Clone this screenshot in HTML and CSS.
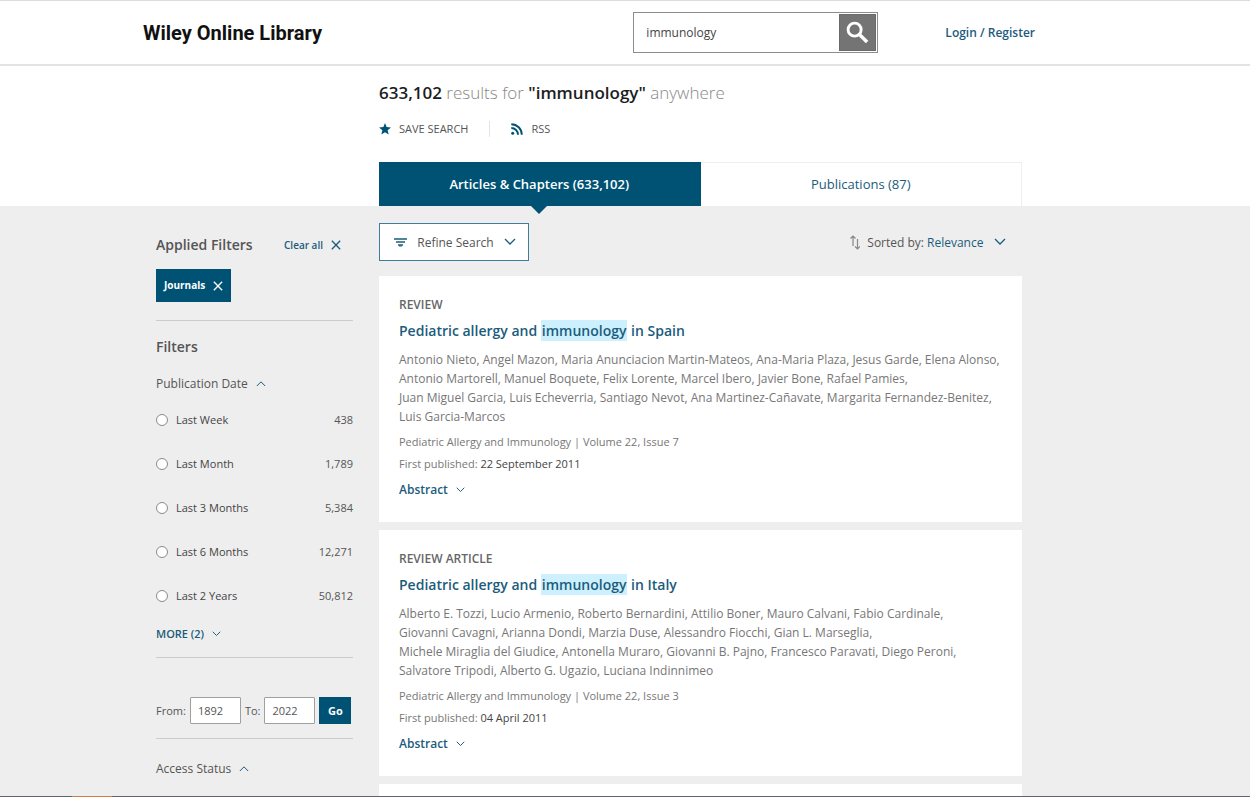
FILE: index.html
```html
<!DOCTYPE html>
<html lang="en">
<head>
<meta charset="utf-8">
<meta name="viewport" content="width=device-width, initial-scale=1">
<title>Search results: immunology - Wiley Online Library</title>
<link rel="stylesheet" href="styles.css">
</head>
<body>
<svg class="defs" aria-hidden="true">
  <symbol id="down" viewBox="0 0 12 8"><path d="M1 1l5 5 5-5" fill="none" stroke="currentColor" stroke-width="1.300"/></symbol>
  <symbol id="up" viewBox="0 0 12 8"><path d="M1 7l5-5 5 5" fill="none" stroke="currentColor" stroke-width="1.200"/></symbol>
  <symbol id="cross" viewBox="0 0 12 12"><path d="M1 1l10 10M11 1L1 11" fill="none" stroke="currentColor" stroke-width="1.600"/></symbol>
</svg>

<header class="site-header">
  <div class="wrap site-bar">
    <a class="brand" href="#">Wiley Online Library</a>
    <form class="search" role="search">
      <input class="search-input" type="text" value="immunology" aria-label="Search">
      <button class="search-button" type="submit" aria-label="Submit search">
        <svg class="search-icon" viewBox="0 0 24 24" aria-hidden="true"><circle cx="9" cy="9" r="6.8" fill="none" stroke="currentColor" stroke-width="3"/><path d="M14 14l8 8" stroke="currentColor" stroke-width="3.6"/></svg>
      </button>
    </form>
    <a class="login" href="#">Login / Register</a>
  </div>
</header>

<section class="summary">
  <div class="wrap summary-inner">
    <h1 class="result-count"><b>633,102</b> results for <b>"immunology"</b> anywhere</h1>
    <div class="actions">
      <a class="action save" href="#"><svg class="icon-star" viewBox="0 0 12 12" aria-hidden="true"><path d="M6 0l1.6 4.1 4.4.3-3.4 2.8L9.700 11.600 6 9.200 2.300 11.600l1.100-4.400L0 4.400l4.400-.3z" fill="currentColor"/></svg>SAVE SEARCH</a>
      <a class="action rss" href="#"><svg class="icon-rss" viewBox="0 0 12 12" aria-hidden="true"><circle cx="1.700" cy="10.300" r="1.500" fill="currentColor"/><path d="M.3 5a6.700 6.700 0 0 1 6.700 6.700M.3 1.200A10.500 10.500 0 0 1 10.800 11.700" fill="none" stroke="currentColor" stroke-width="1.900"/></svg>RSS</a>
    </div>
    <nav class="tabs" aria-label="Result types">
      <a class="tab tab-active" href="#" aria-current="page">Articles &amp; Chapters (633,102)</a>
      <a class="tab" href="#">Publications (87)</a>
    </nav>
  </div>
</section>

<main class="content">
  <div class="wrap columns">
    <aside class="sidebar">
      <div class="applied">
        <h2 class="side-title">Applied Filters</h2>
        <button class="clear" type="button">Clear all <svg class="icon-cross" aria-hidden="true"><use href="#cross"/></svg></button>
      </div>
      <button class="tag" type="button">Journals <svg class="icon-cross" aria-hidden="true"><use href="#cross"/></svg></button>
      <div class="filters">
        <h2 class="side-title">Filters</h2>
        <button class="facet" type="button" aria-expanded="true">Publication Date <svg class="icon-up" aria-hidden="true"><use href="#up"/></svg></button>
        <ul class="options">
          <li class="option"><label class="option-label"><input class="radio" type="radio" name="date">Last Week</label><span class="count">438</span></li>
          <li class="option"><label class="option-label"><input class="radio" type="radio" name="date">Last Month</label><span class="count">1,789</span></li>
          <li class="option"><label class="option-label"><input class="radio" type="radio" name="date">Last 3 Months</label><span class="count">5,384</span></li>
          <li class="option"><label class="option-label"><input class="radio" type="radio" name="date">Last 6 Months</label><span class="count">12,271</span></li>
          <li class="option"><label class="option-label"><input class="radio" type="radio" name="date">Last 2 Years</label><span class="count">50,812</span></li>
        </ul>
        <button class="more" type="button">MORE (2) <svg class="icon-small" aria-hidden="true"><use href="#down"/></svg></button>
      </div>
      <form class="range">
        <label for="from">From:</label>
        <input class="year" id="from" type="text" value="1892">
        <label for="to">To:</label>
        <input class="year" id="to" type="text" value="2022">
        <button class="go" type="submit">Go</button>
      </form>
      <div class="access">
        <button class="facet" type="button" aria-expanded="true">Access Status <svg class="icon-up" aria-hidden="true"><use href="#up"/></svg></button>
      </div>
    </aside>

    <section class="results">
      <div class="toolbar">
        <button class="refine" type="button">
          <svg class="icon-filter" viewBox="0 0 13 9" aria-hidden="true"><path d="M0 1h13M2 4h9M4 7h5" stroke="currentColor" stroke-width="1.300"/><path d="M5 8h3" stroke="currentColor"/></svg>
          Refine Search
          <svg class="icon-chevron" aria-hidden="true"><use href="#down"/></svg>
        </button>
        <div class="sort">
          <svg class="icon-sort" viewBox="0 0 10 15" aria-hidden="true"><path d="M3 11V1M.5 3.500L3 1l2.500 2.500M7.500 4v10M5 11.500L7.500 14l2.500-2.500" fill="none" stroke="currentColor" stroke-width="1.200"/></svg>
          <label for="sort">Sorted by:</label>
          <span class="sort-box">
            <select class="sort-select" id="sort"><option>Relevance</option><option>Date</option></select>
            <svg class="icon-chevron" aria-hidden="true"><use href="#down"/></svg>
          </span>
        </div>
      </div>

      <article class="card">
        <p class="type">REVIEW</p>
        <h2 class="title"><a class="title-link" href="#">Pediatric allergy and <mark class="hit">immunology</mark> in Spain</a></h2>
        <p class="authors"><span class="author">Antonio Nieto,</span> <span class="author">Angel Mazon,</span> <span class="author">Maria Anunciacion Martin-Mateos,</span> <span class="author">Ana-Maria Plaza,</span> <span class="author">Jesus Garde,</span> <span class="author">Elena Alonso,</span> <span class="author">Antonio Martorell,</span> <span class="author">Manuel Boquete,</span> <span class="author">Felix Lorente,</span> <span class="author">Marcel Ibero,</span> <span class="author">Javier Bone,</span> <span class="author">Rafael Pamies,</span> <span class="author">Juan Miguel Garcia,</span> <span class="author">Luis Echeverria,</span> <span class="author">Santiago Nevot,</span> <span class="author">Ana Martinez-Cañavate,</span> <span class="author">Margarita Fernandez-Benitez,</span> <span class="author">Luis Garcia-Marcos</span></p>
        <p class="journal">Pediatric Allergy and Immunology | Volume 22, Issue 7</p>
        <p class="published">First published: <span class="date">22 September 2011</span></p>
        <button class="abstract" type="button">Abstract <svg class="icon-small" aria-hidden="true"><use href="#down"/></svg></button>
      </article>

      <article class="card">
        <p class="type">REVIEW ARTICLE</p>
        <h2 class="title"><a class="title-link" href="#">Pediatric allergy and <mark class="hit">immunology</mark> in Italy</a></h2>
        <p class="authors"><span class="author">Alberto E. Tozzi,</span> <span class="author">Lucio Armenio,</span> <span class="author">Roberto Bernardini,</span> <span class="author">Attilio Boner,</span> <span class="author">Mauro Calvani,</span> <span class="author">Fabio Cardinale,</span> <span class="author">Giovanni Cavagni,</span> <span class="author">Arianna Dondi,</span> <span class="author">Marzia Duse,</span> <span class="author">Alessandro Fiocchi,</span> <span class="author">Gian L. Marseglia,</span> <span class="author">Michele Miraglia del Giudice,</span> <span class="author">Antonella Muraro,</span> <span class="author">Giovanni B. Pajno,</span> <span class="author">Francesco Paravati,</span> <span class="author">Diego Peroni,</span> <span class="author">Salvatore Tripodi,</span> <span class="author">Alberto G. Ugazio,</span> <span class="author">Luciana Indinnimeo</span></p>
        <p class="journal">Pediatric Allergy and Immunology | Volume 22, Issue 3</p>
        <p class="published">First published: <span class="date">04 April 2011</span></p>
        <button class="abstract" type="button">Abstract <svg class="icon-small" aria-hidden="true"><use href="#down"/></svg></button>
      </article>

      <article class="card"></article>
    </section>
  </div>
</main>
<div class="taskbar" aria-hidden="true"><span class="taskbar-item"></span></div>
</body>
</html>
```

FILE: styles.css
```css
:root {
  --blue: #005274;
  --link: #1b5c7c;
  --grey: #eee;
  --rule: #ccc;
}

* { box-sizing: border-box; }

body {
  margin: 0;
  height: 100vh;
  overflow: hidden;
  background: var(--grey);
  color: #555;
  font: 12px/19px "Open Sans", "Noto Sans", sans-serif;
}

h1, h2, p, ul { margin: 0; padding: 0; }
ul { list-style: none; }
a { color: inherit; text-decoration: none; }

button, input, select {
  margin: 0;
  padding: 0;
  border: 0;
  border-radius: 0;
  background: none;
  color: inherit;
  font: inherit;
}

button { cursor: pointer; }
svg { flex: none; display: block; }
.defs { display: none; }

.icon-cross { width: 10px; height: 10px; }
.icon-chevron { width: 12px; height: 8px; color: var(--link); }
.icon-up { width: 10px; height: 7px; color: var(--link); }
.icon-small { width: 9px; height: 6px; color: var(--link); }

.wrap { max-width: 892px; margin: 0 auto; }

.site-header, .summary, .content { padding-right: 72px; }

.site-header {
  background: #fff;
  border-top: 1px solid #ddd;
  border-bottom: 2px solid #e3e3e3;
}

.site-bar {
  display: flex;
  align-items: center;
  height: 63px;
}

.brand {
  flex: 1;
  color: #111;
  font: 700 20px/24px Roboto, "Liberation Sans", sans-serif;
}

.search {
  display: flex;
  width: 245px;
  height: 41px;
  padding: 1px;
  border: 1px solid #8c8c8c;
  background: #fff;
}

.search-input {
  flex: 1;
  min-width: 0;
  padding-left: 11px;
  color: #444;
}

.search-button {
  display: grid;
  place-items: center;
  width: 37px;
  border: 1px solid #6a6a6a;
  background: #747474;
  color: #fff;
}

.search-icon { width: 23px; height: 23px; }

.login {
  margin-left: 67px;
  color: var(--link);
  font-weight: 600;
}

.summary { background: #fff; }

.summary-inner, .columns { padding: 0 13px; }

.summary-inner { padding-left: 236px; }

.result-count {
  padding-top: 15px;
  color: #888;
  font-size: 17px;
  font-weight: 300;
  line-height: 24px;
}

.result-count b { color: #1c1d1e; font-weight: 600; }

.actions {
  display: flex;
  align-items: center;
  margin: 14px 0 24px;
  font-size: 11px;
}

.action { display: flex; align-items: center; }
.save { gap: 8px; padding-right: 21px; border-right: 1px solid #e4e4e4; line-height: 16px; }
.rss { gap: 8px; padding-left: 21px; }
.icon-star, .icon-rss { width: 12px; height: 12px; color: var(--blue); }

.tabs { display: grid; grid-template-columns: 1fr 1fr; }

.tab {
  height: 44px;
  border: 1px solid #eee;
  border-width: 1px 1px 0 0;
  color: var(--link);
  font-size: 13px;
  line-height: 43px;
  text-align: center;
}

.tab-active {
  position: relative;
  border-color: var(--blue);
  background: var(--blue);
  color: #fff;
  font-weight: 600;
}

.tab-active::after {
  content: "";
  position: absolute;
  top: 100%;
  left: 50%;
  margin-left: -8px;
  border: 8px solid transparent;
  border-top-color: var(--blue);
  border-bottom: 0;
}

.columns {
  display: grid;
  grid-template-columns: 197px minmax(0, 1fr);
  gap: 26px;
}

.sidebar { padding-top: 29px; }

.applied {
  display: flex;
  align-items: center;
  justify-content: space-between;
  padding-right: 12px;
}

.side-title {
  color: #555;
  font-size: 14px;
  font-weight: 600;
  line-height: 20px;
}

.clear, .tag, .facet, .more, .abstract { display: flex; align-items: center; gap: 8px; }

.clear { color: var(--link); font-size: 10px; font-weight: 600; }

.tag {
  height: 33px;
  margin: 14px 0 18px;
  padding: 0 8px;
  background: var(--blue);
  color: #fff;
  font-size: 10px;
  font-weight: 700;
}

.filters {
  padding: 16px 0 14px;
  border: 1px solid var(--rule);
  border-width: 1px 0;
}

.facet { font-size: 12px; }
.filters .facet { margin: 17px 0; }

.options { display: grid; gap: 25px; font-size: 11px; }

.option, .option-label { display: flex; align-items: center; }
.option { justify-content: space-between; }
.option-label { gap: 8px; color: #444; }

.radio {
  appearance: none;
  width: 12px;
  height: 12px;
  border: 1px solid #8a8a8a;
  border-radius: 50%;
  background: #fff;
}

.more {
  margin-top: 19px;
  color: var(--link);
  font-size: 11px;
  font-weight: 600;
}

.range {
  display: flex;
  align-items: center;
  gap: 4px;
  padding: 39px 0 14px;
  border-bottom: 1px solid var(--rule);
  font-size: 11px;
}

.year {
  width: 51px;
  height: 27px;
  padding-left: 7px;
  border: 1px solid #a0a0a0;
  border-radius: 1px;
  background: #fff;
}

.go {
  width: 32px;
  height: 27px;
  background: var(--blue);
  color: #fff;
  font-weight: 700;
}

.access { padding-top: 20px; }

.results { display: grid; gap: 8px; }

.toolbar {
  display: flex;
  align-items: center;
  justify-content: space-between;
  padding: 17px 16px 7px 0;
}

.refine {
  display: flex;
  align-items: center;
  justify-content: space-between;
  width: 150px;
  height: 38px;
  padding: 0 12px 0 14px;
  border: 1px solid #3f7d9b;
  background: #fff;
}

.icon-filter { width: 13px; height: 9px; color: var(--link); }

.sort { display: flex; align-items: center; gap: 3px; }
.icon-sort { width: 10px; height: 15px; margin-right: 4px; color: #888; }

.sort-box { display: grid; align-items: center; width: 79px; }
.sort-select, .sort-box .icon-chevron { grid-area: 1 / 1; }
.sort-select { appearance: none; color: var(--link); }
.sort-box .icon-chevron { justify-self: end; pointer-events: none; }

.card {
  min-height: 40px;
  padding: 19px 20px 23px;
  background: #fff;
}

.type { color: #666; font-size: 12px; font-weight: 600; }

.title {
  margin: 6px 0 8px;
  color: var(--link);
  font-size: 14px;
  font-weight: 600;
  line-height: 22px;
}

.hit {
  padding: 1px;
  background: #cdf0fe;
  color: inherit;
}

.authors { color: #777; }
.author { white-space: nowrap; }

.journal, .published { color: #777; font-size: 11px; }
.journal { margin: 6px 0 3px; }
.date { color: #444; }

.abstract {
  margin-top: 7px;
  color: var(--link);
  font-weight: 600;
}

.taskbar {
  position: fixed;
  right: 0;
  bottom: 0;
  left: 0;
  height: 1px;
  padding-left: 72px;
  background: #5d646c;
}

.taskbar-item {
  display: block;
  width: 40px;
  height: 1px;
  background: #cf7a45;
}
```
